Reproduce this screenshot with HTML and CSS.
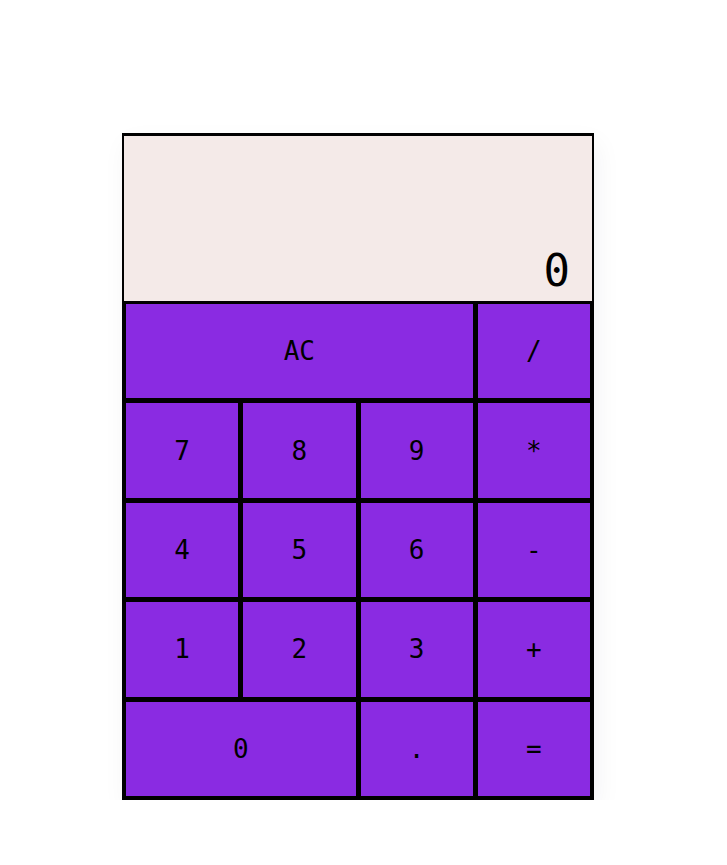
FILE: index.html
```html
<!DOCTYPE html>
<html lang="en">
<head>
    <meta charset="UTF-8">
    <meta name="viewport" content="width=device-width, initial-scale=1.0">
    <title>Calculator</title>
    <link rel="stylesheet" href="styles.css">
</head>
<body>
    <div class="page">
        <div class="calculator">
            <div class="display" id="display">0</div>
            <button class="key span-3">AC</button>
            <button class="key">/</button>
            <button class="key">7</button>
            <button class="key">8</button>
            <button class="key">9</button>
            <button class="key">*</button>
            <button class="key">4</button>
            <button class="key">5</button>
            <button class="key">6</button>
            <button class="key">-</button>
            <button class="key">1</button>
            <button class="key">2</button>
            <button class="key">3</button>
            <button class="key">+</button>
            <button class="key span-2">0</button>
            <button class="key">.</button>
            <button class="key">=</button>
        </div>
    </div>
</body>
</html>
```

FILE: styles.css
```css
body {
    margin: 0;
    padding: 0;
    background-color: #fff;
    font-family: "DejaVu Sans Mono", "Liberation Mono", monospace;
}
.page {
    display: flex;
    justify-content: center;
    padding: 133px 11px 0 0;
}
.calculator {
    box-sizing: border-box;
    width: 472px;
    height: 667px;
    display: grid;
    grid-template-columns: repeat(4, 1fr);
    grid-template-rows: 166px repeat(5, 1fr);
    gap: 1px;
    background-color: #000;
    border: 2px solid #000;
    box-shadow: 4px 10px 24px rgba(20, 20, 60, 0.05);
}
.display {
    grid-column: span 4;
    display: flex;
    align-items: flex-end;
    justify-content: flex-end;
    padding: 0 22px 5px 0;
    background-color: #f4eae8;
    border-top: 1px solid #000;
    font-size: 44px;
    color: #000;
}
.key {
    border: 2px solid #000;
    background-color: #8a2be2;
    color: #000;
    font-family: inherit;
    font-size: 26px;
    padding: 0;
    margin: 0;
    cursor: pointer;
}
.key:hover {
    background-color: #9b45ec;
}
.span-2 {
    grid-column: span 2;
}
.span-3 {
    grid-column: span 3;
}
```
